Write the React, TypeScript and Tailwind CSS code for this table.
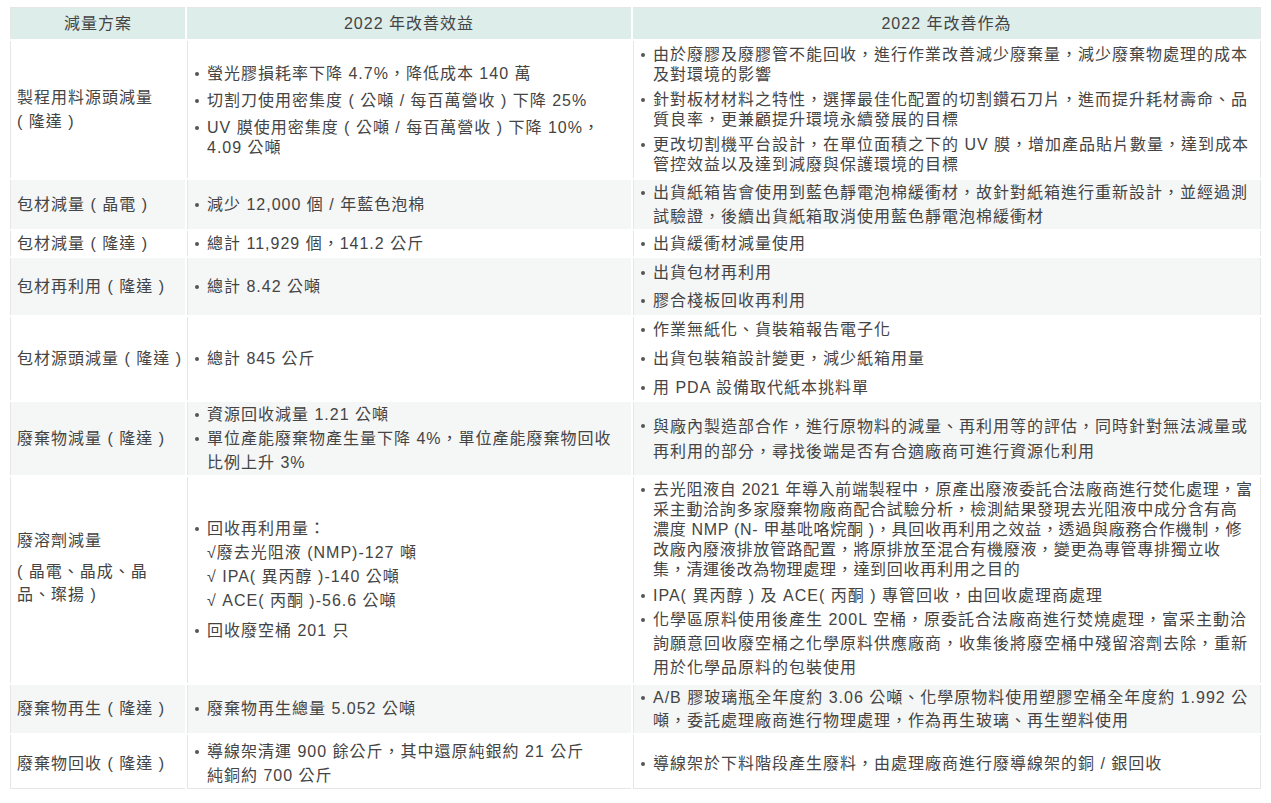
import type { ReactNode } from "react";

function Dot({ lh = "h-6" }: { lh?: string }) {
  return (
    <span className={`w-[13px] shrink-0 flex items-center ${lh}`}>
      <span className="ml-[1px] w-[4px] h-[4px] rounded-full bg-[#555]" />
    </span>
  );
}

function Item({ children, lh = "leading-6", dot = "h-6" }: { children: ReactNode; lh?: string; dot?: string }) {
  return (
    <div className={`flex ${lh}`}>
      <Dot lh={dot} />
      <div>{children}</div>
    </div>
  );
}

const cell = "border-l border-[#e6e6e6] px-[6px] align-middle";

function Row({
  h,
  gray,
  last,
  a,
  b,
  c,
}: {
  h: string;
  gray?: boolean;
  last?: boolean;
  a: ReactNode;
  b: ReactNode;
  c: ReactNode;
}) {
  const bg = gray ? "bg-[#f5f6f6]" : "bg-white";
  const bb = last ? "border-b pt-[5px]" : "";
  return (
    <tr className={h}>
      <td className={`${cell} ${bg} ${bb} pr-[1px] leading-6`}>{a}</td>
      <td className={`${cell} ${bg} ${bb}`}>{b}</td>
      <td className={`${cell} ${bg} ${bb} border-r`}>{c}</td>
    </tr>
  );
}

export default function App() {
  return (
    <div className="w-[1271px] h-[803px] bg-white pt-[5px] pl-2 [font-family:'Liberation_Sans','Noto_Sans_CJK_TC',sans-serif] text-[16px] tracking-[1px] text-[#444]">
      <table className="w-[1255px] table-fixed border-separate border-spacing-[2px]">
        <thead>
          <tr className="h-[32px]">
            <th className="w-[175px] font-normal bg-[#ddedea] border-l border-t border-[#e6e6e6]">減量方案</th>
            <th className="w-[444px] font-normal bg-[#ddedea] border-t border-[#e6e6e6]">2022 年改善效益</th>
            <th className="w-[628px] font-normal bg-[#ddedea] border-t border-r border-[#e6e6e6]">2022 年改善作為</th>
          </tr>
        </thead>
        <tbody>
          <Row
            h="h-[137px]"
            a={
              <>
                製程用料源頭減量
                <br />( 隆達 )
              </>
            }
            b={
              <div className="flex flex-col gap-[7px] mt-[3px]">
                <Item lh="leading-5" dot="h-5">螢光膠損耗率下降 4.7%，降低成本 140 萬</Item>
                <Item lh="leading-5" dot="h-5">切割刀使用密集度 ( 公噸 / 每百萬營收 ) 下降 25%</Item>
                <Item lh="leading-5" dot="h-5">UV 膜使用密集度 ( 公噸 / 每百萬營收 ) 下降 10%，4.09 公噸</Item>
              </div>
            }
            c={
              <div className="flex flex-col gap-[5px]">
                <Item lh="leading-5" dot="h-5">由於廢膠及廢膠管不能回收，進行作業改善減少廢棄量，減少廢棄物處理的成本及對環境的影響</Item>
                <Item lh="leading-5" dot="h-5">針對板材材料之特性，選擇最佳化配置的切割鑽石刀片，進而提升耗材壽命、品質良率，更兼顧提升環境永續發展的目標</Item>
                <Item lh="leading-5" dot="h-5">更改切割機平台設計，在單位面積之下的 UV 膜，增加產品貼片數量，達到成本管控效益以及達到減廢與保護環境的目標</Item>
              </div>
            }
          />
          <Row
            h="h-[49px]"
            gray
            a="包材減量 ( 晶電 )"
            b={<Item>減少 12,000 個 / 年藍色泡棉</Item>}
            c={<Item>出貨紙箱皆會使用到藍色靜電泡棉緩衝材，故針對紙箱進行重新設計，並經過測試驗證，後續出貨紙箱取消使用藍色靜電泡棉緩衝材</Item>}
          />
          <Row h="h-[25px]" a="包材減量 ( 隆達 )" b={<Item>總計 11,929 個，141.2 公斤</Item>} c={<Item>出貨緩衝材減量使用</Item>} />
          <Row
            h="h-[57px]"
            gray
            a="包材再利用 ( 隆達 )"
            b={<Item>總計 8.42 公噸</Item>}
            c={
              <div className="flex flex-col gap-1">
                <Item>出貨包材再利用</Item>
                <Item>膠合棧板回收再利用</Item>
              </div>
            }
          />
          <Row
            h="h-[83px]"
            a="包材源頭減量 ( 隆達 )"
            b={<Item>總計 845 公斤</Item>}
            c={
              <div className="flex flex-col gap-[5px]">
                <Item>作業無紙化、貨裝箱報告電子化</Item>
                <Item>出貨包裝箱設計變更，減少紙箱用量</Item>
                <Item>用 PDA 設備取代紙本挑料單</Item>
              </div>
            }
          />
          <Row
            h="h-[73px]"
            gray
            a="廢棄物減量 ( 隆達 )"
            b={
              <div className="flex flex-col">
                <Item>資源回收減量 1.21 公噸</Item>
                <Item>單位產能廢棄物產生量下降 4%，單位產能廢棄物回收比例上升 3%</Item>
              </div>
            }
            c={
              <Item lh="leading-[25px]" dot="h-[25px]">
                與廠內製造部合作，進行原物料的減量、再利用等的評估，同時針對無法減量或再利用的部分，尋找後端是否有合適廠商可進行資源化利用
              </Item>
            }
          />
          <Row
            h="h-[206px]"
            a={
              <div className="flex flex-col gap-[7px] mb-[26px]">
                <p>廢溶劑減量</p>
                <p className="leading-[23px]">
                  ( 晶電、晶成、晶
                  <br />
                  品、璨揚 )
                </p>
              </div>
            }
            b={
              <div className="flex flex-col gap-[6px]">
                <Item>
                  回收再利用量：
                  <br />
                  √廢去光阻液 (NMP)-127 噸
                  <br />
                  √ IPA( 異丙醇 )-140 公噸
                  <br />
                  √ ACE( 丙酮 )-56.6 公噸
                </Item>
                <Item>回收廢空桶 201 只</Item>
              </div>
            }
            c={
              <div className="flex flex-col">
                <Item lh="leading-5 tracking-[0.7px]" dot="h-5">
                  去光阻液自 2021 年導入前端製程中，原產出廢液委託合法廠商進行焚化處理，富采主動洽詢多家廢棄物廠商配合試驗分析，檢測結果發現去光阻液中成分含有高濃度 NMP (N- 甲基吡咯烷酮 )，具回收再利用之效益，透過與廠務合作機制，修改廠內廢液排放管路配置，將原排放至混合有機廢液，變更為專管專排獨立收集，清運後改為物理處理，達到回收再利用之目的
                </Item>
                <div className="mt-1">
                  <Item>IPA( 異丙醇 ) 及 ACE( 丙酮 ) 專管回收，由回收處理商處理</Item>
                </div>
                <Item>
                  化學區原料使用後產生 200L 空桶，原委託合法廠商進行焚燒處理，富采主動洽詢願意回收廢空桶之化學原料供應廠商，收集後將廢空桶中殘留溶劑去除，重新用於化學品原料的包裝使用
                </Item>
              </div>
            }
          />
          <Row
            h="h-[48px]"
            gray
            a="廢棄物再生 ( 隆達 )"
            b={<Item>廢棄物再生總量 5.052 公噸</Item>}
            c={
              <Item lh="leading-[23px]" dot="h-[23px]">
                A/B 膠玻璃瓶全年度約 3.06 公噸、化學原物料使用塑膠空桶全年度約 1.992 公噸，委託處理廠商進行物理處理，作為再生玻璃、再生塑料使用
              </Item>
            }
          />
          <Row
            h="h-[53px]"
            last
            a="廢棄物回收 ( 隆達 )"
            b={
              <Item>
                導線架清運 900 餘公斤，其中還原純銀約 21 公斤
                <br />
                純銅約 700 公斤
              </Item>
            }
            c={<Item>導線架於下料階段產生廢料，由處理廠商進行廢導線架的銅 / 銀回收</Item>}
          />
        </tbody>
      </table>
    </div>
  );
}
